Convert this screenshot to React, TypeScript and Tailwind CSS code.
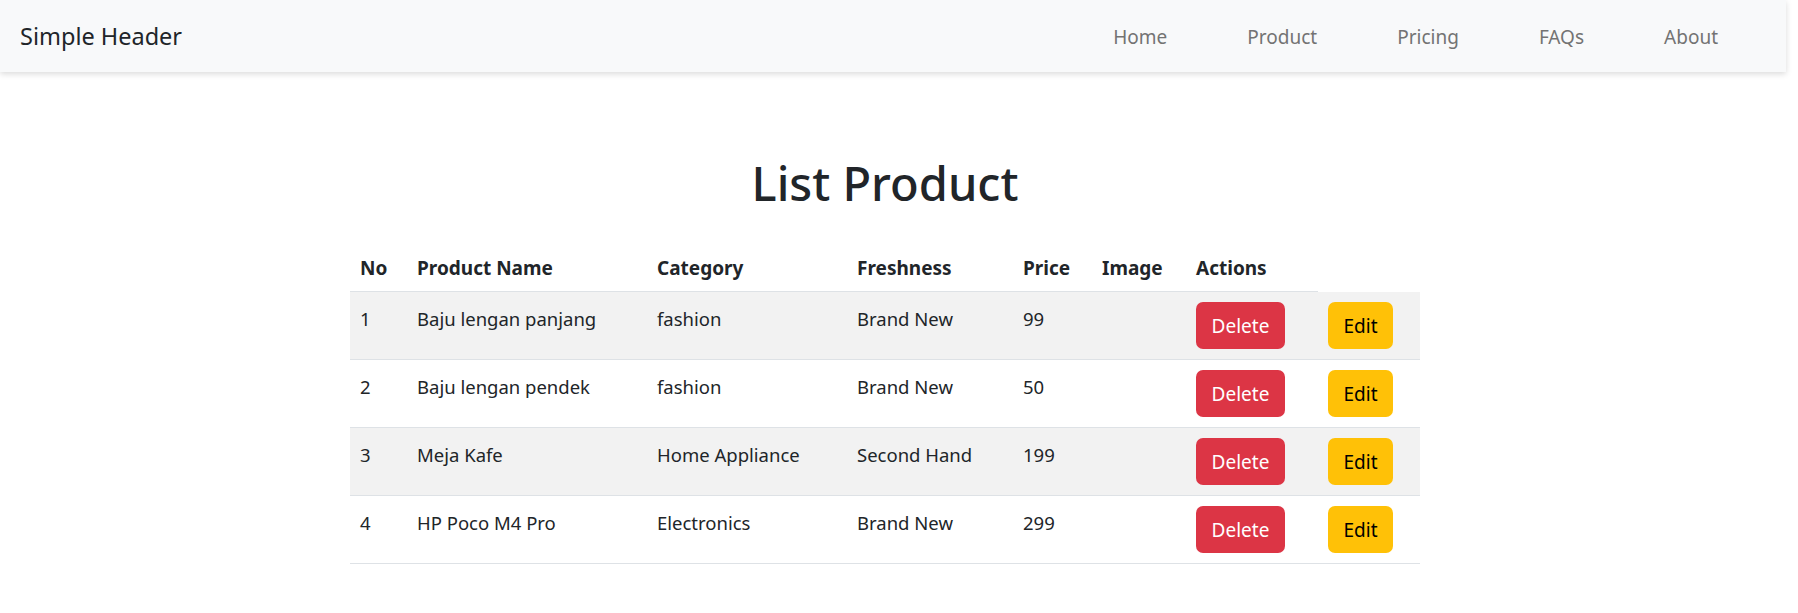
import React from "react";

const rows = [
  { no: 1, name: "Baju lengan panjang", cat: "fashion", fresh: "Brand New", price: "99" },
  { no: 2, name: "Baju lengan pendek", cat: "fashion", fresh: "Brand New", price: "50" },
  { no: 3, name: "Meja Kafe", cat: "Home Appliance", fresh: "Second Hand", price: "199" },
  { no: 4, name: "HP Poco M4 Pro", cat: "Electronics", fresh: "Brand New", price: "299" },
];

const th = "px-[10px] pt-[11px] pb-[9px] border-b border-[#dee2e6]";
const td = "px-[10px] pt-[13px] pb-[10px] align-top border-b border-[#dee2e6]";
const tdBtn = "px-[10px] pt-[10px] pb-[10px] align-top border-b border-[#dee2e6]";

export default function App() {
  return (
    <div className="min-h-screen bg-white text-[#212529] font-['Noto_Sans',sans-serif]">
      <header className="w-[1786px] h-[72px] bg-[#f8f9fa] shadow-[0_2px_6px_rgba(0,0,0,0.15)] flex items-center justify-between pl-[20px] pr-[68px] pt-[2px]">
        <span className="text-[23.5px] leading-none text-[#212529]">Simple Header</span>
        <nav className="flex gap-[80px] text-[19px] text-[#737373]">
          <a>Home</a>
          <a>Product</a>
          <a>Pricing</a>
          <a>FAQs</a>
          <a>About</a>
        </nav>
      </header>
      <main className="ml-[350px] w-[1070px] pt-[84px]">
        <h1 className="text-center text-[47px] leading-[55px] font-medium mb-[33px]">List Product</h1>
        <table className="table-fixed border-collapse w-[1070px] text-[18.5px] leading-[27px]">
          <colgroup>
            <col className="w-[57px]" />
            <col className="w-[240px]" />
            <col className="w-[200px]" />
            <col className="w-[166px]" />
            <col className="w-[79px]" />
            <col className="w-[94px]" />
            <col className="w-[132px]" />
            <col className="w-[102px]" />
          </colgroup>
          <thead>
            <tr className="text-left font-bold text-[19px]">
              <th className={th}>No</th>
              <th className={th}>Product Name</th>
              <th className={th}>Category</th>
              <th className={th}>Freshness</th>
              <th className={th}>Price</th>
              <th className={th}>Image</th>
              <th className={th}>Actions</th>
            </tr>
          </thead>
          <tbody>
            {rows.map((r, i) => (
              <tr key={r.no} className={i % 2 === 0 ? "bg-[#f2f2f2]" : "bg-white"}>
                <td className={td}>{r.no}</td>
                <td className={td}>{r.name}</td>
                <td className={td}>{r.cat}</td>
                <td className={td}>{r.fresh}</td>
                <td className={td}>{r.price}</td>
                <td className={td}></td>
                <td className={tdBtn}>
                  <button className="h-[47px] w-[89px] rounded-[7px] bg-[#dc3545] text-white text-[19px] pt-[2px]">Delete</button>
                </td>
                <td className={tdBtn}>
                  <button className="h-[47px] w-[65px] rounded-[7px] bg-[#ffc107] text-black text-[19px] pt-[2px]">Edit</button>
                </td>
              </tr>
            ))}
          </tbody>
        </table>
      </main>
    </div>
  );
}
